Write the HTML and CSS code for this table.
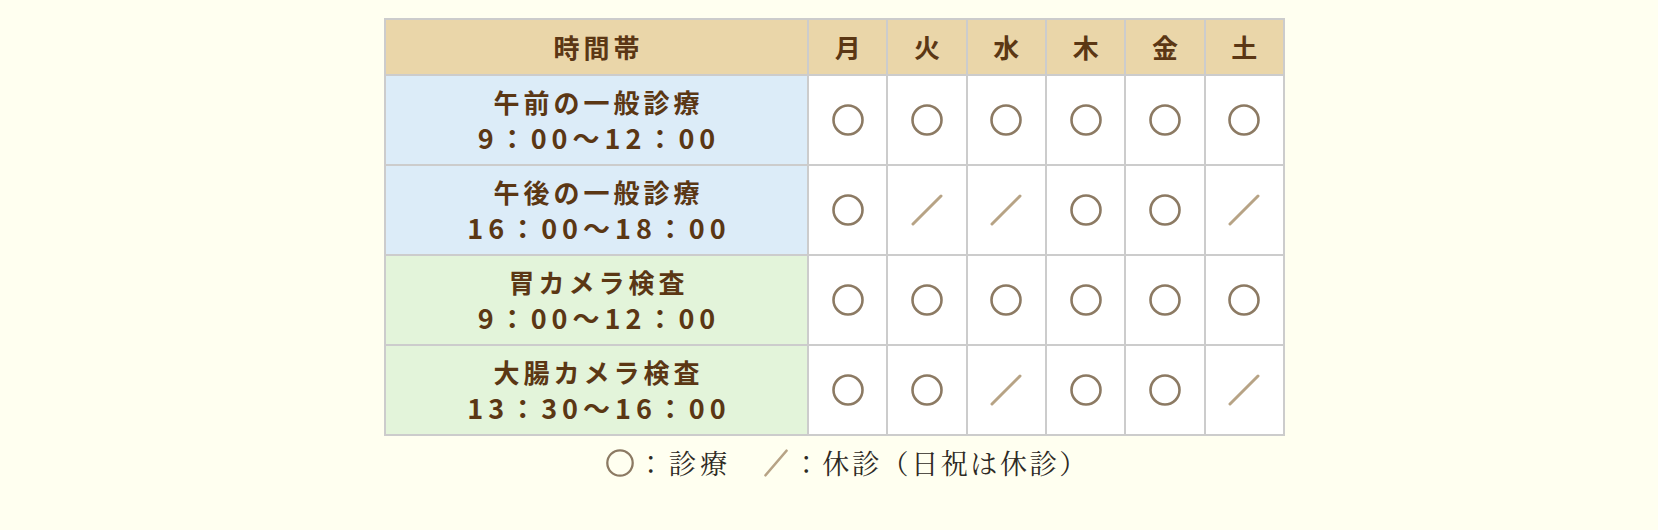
FILE: index.html
```html
<!DOCTYPE html>
<html lang="ja">
<head>
<meta charset="utf-8">
<title>診療時間</title>
<link rel="stylesheet" href="styles.css">
</head>
<body>
<div class="schedule">
  <table class="hours">
    <thead>
      <tr>
        <th class="slot-head">時間帯</th>
        <th>月</th><th>火</th><th>水</th><th>木</th><th>金</th><th>土</th>
      </tr>
    </thead>
    <tbody>
      <tr class="blue">
        <th class="slot"><span class="name">午前の一般診療</span><span class="time">9：00～12：00</span></th>
        <td><svg class="mark" viewBox="0 0 32 32"><circle cx="16" cy="16" r="14.5"/></svg></td>
        <td><svg class="mark" viewBox="0 0 32 32"><circle cx="16" cy="16" r="14.5"/></svg></td>
        <td><svg class="mark" viewBox="0 0 32 32"><circle cx="16" cy="16" r="14.5"/></svg></td>
        <td><svg class="mark" viewBox="0 0 32 32"><circle cx="16" cy="16" r="14.5"/></svg></td>
        <td><svg class="mark" viewBox="0 0 32 32"><circle cx="16" cy="16" r="14.5"/></svg></td>
        <td><svg class="mark" viewBox="0 0 32 32"><circle cx="16" cy="16" r="14.5"/></svg></td>
      </tr>
      <tr class="blue">
        <th class="slot"><span class="name">午後の一般診療</span><span class="time">16：00～18：00</span></th>
        <td><svg class="mark" viewBox="0 0 32 32"><circle cx="16" cy="16" r="14.5"/></svg></td>
        <td><svg class="mark slash" viewBox="0 0 32 32"><line x1="2" y1="30" x2="30" y2="2"/></svg></td>
        <td><svg class="mark slash" viewBox="0 0 32 32"><line x1="2" y1="30" x2="30" y2="2"/></svg></td>
        <td><svg class="mark" viewBox="0 0 32 32"><circle cx="16" cy="16" r="14.5"/></svg></td>
        <td><svg class="mark" viewBox="0 0 32 32"><circle cx="16" cy="16" r="14.5"/></svg></td>
        <td><svg class="mark slash" viewBox="0 0 32 32"><line x1="2" y1="30" x2="30" y2="2"/></svg></td>
      </tr>
      <tr class="green">
        <th class="slot"><span class="name">胃カメラ検査</span><span class="time">9：00～12：00</span></th>
        <td><svg class="mark" viewBox="0 0 32 32"><circle cx="16" cy="16" r="14.5"/></svg></td>
        <td><svg class="mark" viewBox="0 0 32 32"><circle cx="16" cy="16" r="14.5"/></svg></td>
        <td><svg class="mark" viewBox="0 0 32 32"><circle cx="16" cy="16" r="14.5"/></svg></td>
        <td><svg class="mark" viewBox="0 0 32 32"><circle cx="16" cy="16" r="14.5"/></svg></td>
        <td><svg class="mark" viewBox="0 0 32 32"><circle cx="16" cy="16" r="14.5"/></svg></td>
        <td><svg class="mark" viewBox="0 0 32 32"><circle cx="16" cy="16" r="14.5"/></svg></td>
      </tr>
      <tr class="green">
        <th class="slot"><span class="name">大腸カメラ検査</span><span class="time">13：30～16：00</span></th>
        <td><svg class="mark" viewBox="0 0 32 32"><circle cx="16" cy="16" r="14.5"/></svg></td>
        <td><svg class="mark" viewBox="0 0 32 32"><circle cx="16" cy="16" r="14.5"/></svg></td>
        <td><svg class="mark slash" viewBox="0 0 32 32"><line x1="2" y1="30" x2="30" y2="2"/></svg></td>
        <td><svg class="mark" viewBox="0 0 32 32"><circle cx="16" cy="16" r="14.5"/></svg></td>
        <td><svg class="mark" viewBox="0 0 32 32"><circle cx="16" cy="16" r="14.5"/></svg></td>
        <td><svg class="mark slash" viewBox="0 0 32 32"><line x1="2" y1="30" x2="30" y2="2"/></svg></td>
      </tr>
    </tbody>
  </table>
  <p class="legend">
    <svg class="legend-mark" viewBox="0 0 32 32"><circle cx="16" cy="16" r="14.5"/></svg><span class="legend-text first">：診療</span><span class="legend-gap"></span><svg class="legend-mark slash" viewBox="0 0 32 32"><line x1="4" y1="30" x2="28" y2="2"/></svg><span class="legend-text">：休診（日祝は休診）</span>
  </p>
</div>
</body>
</html>
```

FILE: styles.css
```css
html, body {
  margin: 0;
  padding: 0;
  background: #fffff0;
}

.schedule {
  width: 901px;
  margin: 18px 0 0 384px;
}

.hours {
  width: 901px;
  border-collapse: collapse;
  table-layout: fixed;
  font-family: "Noto Sans CJK JP", "Noto Sans", sans-serif;
  font-weight: 700;
  color: #5b3714;
}

.hours th,
.hours td {
  border: 2px solid #cccccc;
  padding: 0;
  text-align: center;
  vertical-align: middle;
}

.hours thead th {
  background: #ead6a9;
  height: 54px;
  font-size: 26px;
  line-height: 30px;
  letter-spacing: 4px;
  text-indent: 4px;
}

.hours thead th.slot-head {
  width: 421px;
}

.hours tbody td {
  background: #ffffff;
  height: 88px;
}

.hours tbody th.slot {
  font-size: 26px;
  line-height: 36px;
}

.slot .name,
.slot .time {
  display: block;
}

.slot .name {
  letter-spacing: 4px;
  text-indent: 4px;
}

.slot .time {
  font-size: 27px;
  letter-spacing: 5px;
  text-indent: 5px;
}

.blue th.slot {
  background: #dcecf8;
}

.green th.slot {
  background: #e3f4da;
}

.mark {
  display: block;
  width: 32px;
  height: 32px;
  margin: 0 auto;
}

.mark circle,
.legend-mark circle {
  fill: none;
  stroke: #8c7a63;
  stroke-width: 2.6;
}

.mark.slash line,
.legend-mark.slash line {
  stroke: #b7a385;
  stroke-width: 3;
  stroke-linecap: round;
}

.legend {
  margin: 9px 0 0;
  display: flex;
  justify-content: center;
  align-items: center;
  font-family: "Noto Serif CJK JP", "Liberation Serif", "Noto Sans CJK JP", serif;
  font-size: 27px;
  line-height: 36px;
  color: #2e2a24;
  padding-left: 26px;
}

.legend-mark {
  width: 28px;
  height: 28px;
  flex: none;
  margin-right: 3px;
}

.legend-text {
  letter-spacing: 2.6px;
}

.legend-text.first {
  letter-spacing: 4.5px;
}

.legend-gap {
  width: 30px;
}
```
